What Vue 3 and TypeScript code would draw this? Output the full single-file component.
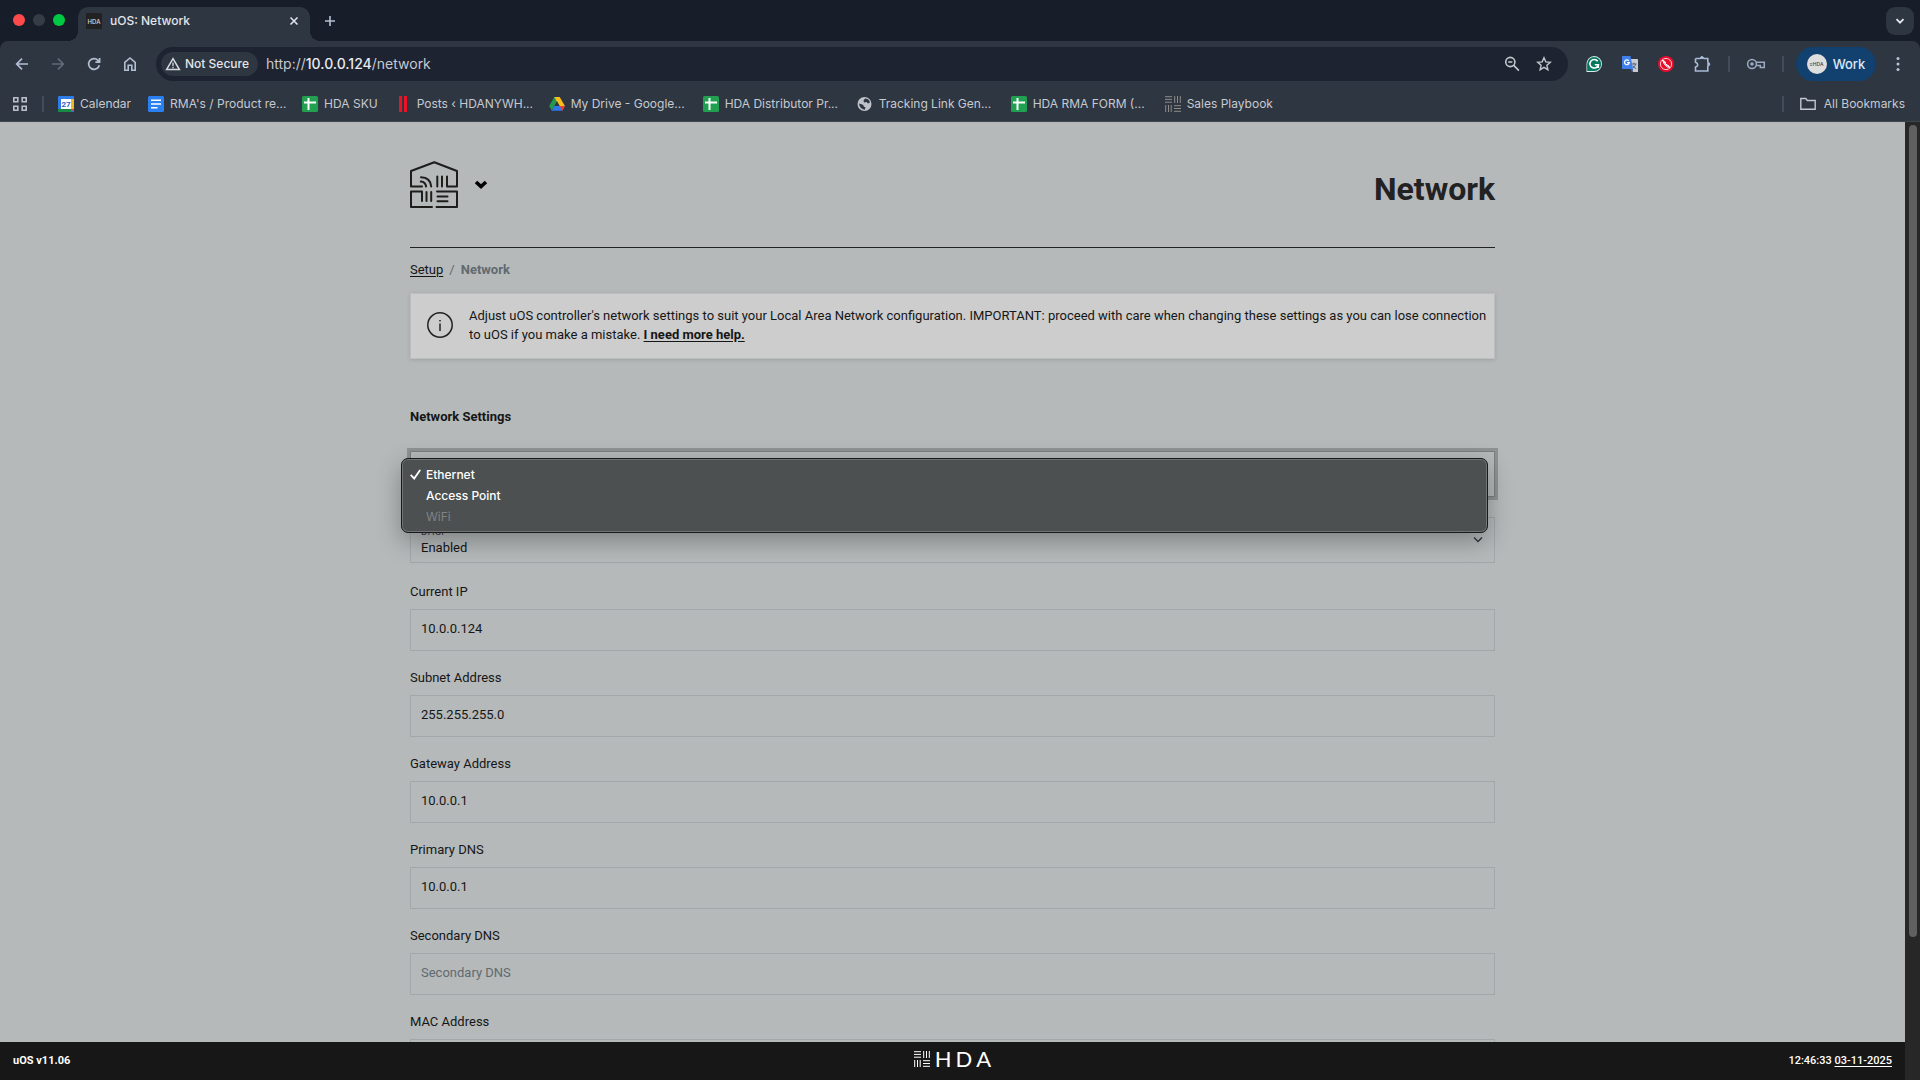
<script setup lang="ts">
import { ref } from 'vue'

type BookmarkIcon = 'calendar' | 'docs' | 'sheets' | 'bars' | 'drive' | 'globe' | 'grid'

interface Bookmark {
  label: string
  icon: BookmarkIcon
  clipped?: boolean
}

interface Field {
  id: string
  label: string
  value: string
  placeholder?: string
}

const bookmarks: Bookmark[] = [
  { label: 'Calendar', icon: 'calendar' },
  { label: "RMA's / Product re...", icon: 'docs', clipped: true },
  { label: 'HDA SKU', icon: 'sheets' },
  { label: 'Posts ‹ HDANYWH...', icon: 'bars', clipped: true },
  { label: 'My Drive - Google...', icon: 'drive', clipped: true },
  { label: 'HDA Distributor Pr...', icon: 'sheets', clipped: true },
  { label: 'Tracking Link Gen...', icon: 'globe', clipped: true },
  { label: 'HDA RMA FORM (...', icon: 'sheets', clipped: true },
  { label: 'Sales Playbook', icon: 'grid' },
]

const options = [
  { label: 'Ethernet', disabled: false },
  { label: 'Access Point', disabled: false },
  { label: 'WiFi', disabled: true },
]

const connection = ref('Ethernet')
const dhcp = ref('Enabled')

const fields = ref<Field[]>([
  { id: 'current-ip', label: 'Current IP', value: '10.0.0.124' },
  { id: 'subnet', label: 'Subnet Address', value: '255.255.255.0' },
  { id: 'gateway', label: 'Gateway Address', value: '10.0.0.1' },
  { id: 'dns-primary', label: 'Primary DNS', value: '10.0.0.1' },
  { id: 'dns-secondary', label: 'Secondary DNS', value: '', placeholder: 'Secondary DNS' },
  { id: 'mac', label: 'MAC Address', value: '' },
])
</script>

<template>
  <div class="window">
    <header class="chrome">
      <div class="tabstrip">
        <div class="lights"><i class="red"></i><i class="grey"></i><i class="green"></i></div>
        <div class="tab">
          <span class="favicon">HDA</span>
          <span class="tab-title">uOS: Network</span>
          <button class="tab-close" aria-label="Close tab">
            <svg width="10" height="10" viewBox="0 0 10 10"><path d="M1.5 1.5l7 7M8.500 1.500l-7 7" stroke="#dfe3ea" stroke-width="1.600" /></svg>
          </button>
        </div>
        <button class="new-tab" aria-label="New tab">
          <svg width="12" height="12" viewBox="0 0 12 12"><path d="M6 1v10M1 6h10" stroke="#b4c0d4" stroke-width="1.600" /></svg>
        </button>
        <button class="tab-search" aria-label="Search tabs">
          <svg width="12" height="12" viewBox="0 0 12 12" fill="none"><path d="M2.500 4.200L6 7.700l3.500-3.500" stroke="#e4e8ee" stroke-width="1.800" /></svg>
        </button>
      </div>

      <div class="toolbar">
        <button class="tool" aria-label="Back">
          <svg width="16" height="16" viewBox="0 0 16 16" fill="none" stroke="#b2bed2" stroke-width="1.700"><path d="M14 8H3M8 2.700L2.700 8 8 13.300" /></svg>
        </button>
        <button class="tool" aria-label="Forward">
          <svg width="16" height="16" viewBox="0 0 16 16" fill="none" stroke="#606a78" stroke-width="1.700"><path d="M2 8h11M8 2.700L13.300 8 8 13.300" /></svg>
        </button>
        <button class="tool" aria-label="Reload">
          <svg width="16" height="16" viewBox="0 0 16 16" fill="none" stroke="#b2bed2" stroke-width="1.700"><path d="M13.300 9.200A5.400 5.400 0 1 1 12 4.300L13.600 6M13.600 2v4.200H9.400" /></svg>
        </button>
        <button class="tool" aria-label="Home">
          <svg width="16" height="16" viewBox="0 0 16 16" fill="none" stroke="#b2bed2" stroke-width="1.600"><path d="M2.800 6.300L8 2l5.200 4.300v8H9.800V9.300H6.200v5H2.800z" /></svg>
        </button>

        <div class="omnibox">
          <button class="chip">
            <svg width="16" height="14" viewBox="0 0 16 14" fill="none" stroke="#d5d9e0" stroke-width="1.500"><path d="M8 1.700L14.400 12.500H1.600z" /><path d="M8 5.500v3.400M8 9.800v1.400" stroke-width="1.300" /></svg>
            <span>Not Secure</span>
          </button>
          <span class="url">http://<b>10.0.0.124</b>/network</span>
          <button class="inner" aria-label="Zoom">
            <svg width="16" height="16" viewBox="0 0 16 16" fill="none" stroke="#c3c7ce" stroke-width="1.600"><circle cx="6.300" cy="6" r="4.600" /><path d="M9.700 9.400l5.200 5.200M4.200 6h4.200" /></svg>
          </button>
          <button class="inner" aria-label="Bookmark this page">
            <svg width="16" height="16" viewBox="0 0 16 16" fill="none" stroke="#c3c7ce" stroke-width="1.400"><path d="M8 1.800l1.800 4.100 4.500.4-3.400 3 1 4.400L8 11.400l-3.900 2.300 1-4.400-3.400-3 4.500-.4z" /></svg>
          </button>
        </div>

        <button class="tool" aria-label="Grammarly">
          <svg width="16" height="16" viewBox="0 0 16 16"><path d="M8 0a8 8 0 1 1 0 16H.5V8A7.800 7.800 0 0 1 8 0z" fill="#d7eee9" /><circle cx="8.200" cy="8" r="7" fill="#08775f" /><path d="M1.200 8v7h7" fill="#08775f" /><path d="M11.700 5.200A4.300 4.300 0 1 0 12.400 8.800H8.800M12.300 8.500v3.400" fill="none" stroke="#fff" stroke-width="1.600" /></svg>
        </button>
        <button class="tool" aria-label="Translate">
          <svg width="16" height="16" viewBox="0 0 16 16"><path d="M6 3h9.300q.7 0 .7.700V16h-5z" fill="#c8ccd2" /><path d="M9.500 8h5M12 6.500V8M13.800 8q-.8 3-3.400 4.200M10.800 9.500q1 2.300 3.400 3.300" stroke="#57657a" fill="none" /><path d="M0 .8Q0 0 .8 0H8.500L11 13H.8Q0 13 0 12.200z" fill="#3f80ea" /><path d="M8.500 13h2.700L9.500 16z" fill="#3558b6" /><path d="M6.800 4.800A2.400 2.400 0 1 0 7.300 6.700H5" fill="none" stroke="#fff" stroke-width="1.300" /></svg>
        </button>
        <button class="tool" aria-label="Call blocker">
          <svg width="16" height="16" viewBox="0 0 16 16" fill="none"><circle cx="8" cy="8" r="8" fill="#e80d2d" /><circle cx="8" cy="8" r="5.600" stroke="#f6c6cc" /><path d="M5.500 4.400q-1 1 .8 3.600t4 3.500l1-1.200-1.600-1.200-1 .5-1.600-2.200.5-1.200z" stroke="#fff" /><path d="M4 4l8 8" stroke="#fff" /></svg>
        </button>
        <button class="tool" aria-label="Extensions">
          <svg width="18" height="18" viewBox="0 0 18 18" fill="none" stroke="#a9bbd8" stroke-width="1.600"><path d="M2.500 3.500h5M10.500 3.500h4.300v4M14.800 11v5H2.500v-4q2.200-.4 2.200-2.200T2.500 7.300V3.500" /><path d="M7.200 3.500q0-2 1.700-2t1.700 2zM14.800 7.500q2 0 2 1.700t-2 1.700z" fill="#a9bbd8" stroke-width="1" /></svg>
        </button>
        <i class="divider spaced"></i>
        <button class="tool" aria-label="Passwords">
          <svg width="20" height="14" viewBox="0 0 20 14" fill="none" stroke="#9cabc2" stroke-width="1.500"><circle cx="6" cy="7" r="4.400" /><circle cx="6" cy="7" r="1.800" fill="#9cabc2" stroke="none" /><path d="M10 5.300h8.300v5.200h-4V8.500H10" /></svg>
        </button>
        <i class="divider spaced"></i>
        <button class="profile"><span class="avatar">≡HDA</span><span>Work</span></button>
        <button class="tool more" aria-label="Menu">
          <svg width="4" height="16" viewBox="0 0 4 16" fill="#b9c4d6"><circle cx="2" cy="2.500" r="1.500" /><circle cx="2" cy="8" r="1.500" /><circle cx="2" cy="13.500" r="1.500" /></svg>
        </button>
      </div>

      <nav class="bookmarks">
        <button class="apps" aria-label="Apps">
          <svg width="14" height="14" viewBox="0 0 14 14" fill="none" stroke="#bcc0c8" stroke-width="1.600"><path d="M.8.8h4v4h-4zM9.200.8h4v4h-4zM.8 9.200h4v4h-4zM9.200 9.200h4v4h-4z" /></svg>
        </button>
        <i class="divider"></i>
        <div class="links">
          <a v-for="b in bookmarks" :key="b.label" href="#" class="bookmark">
            <svg width="16" height="16" viewBox="0 0 16 16">
              <template v-if="b.icon === 'calendar'">
                <rect width="16" height="16" rx="1" fill="#2f7de9" /><path d="M13 3h3v10h-3z" fill="#f4b529" /><path d="M0 13h13v3H1q-1 0-1-1z" fill="#188a42" /><path d="M13 13h3l-3 3z" fill="#e34133" /><path d="M3 3h10v10H3z" fill="#fff" />
                <text x="8" y="11" text-anchor="middle" font-family="Roboto, sans-serif" font-weight="700" font-size="8" fill="#2a63c4">27</text>
              </template>
              <template v-else-if="b.icon === 'docs'">
                <rect width="16" height="16" rx="1.500" fill="#2a80f0" /><path d="M3 4.200h10M3 8h10M3 11.800h6.500" stroke="#fff" stroke-width="1.600" />
              </template>
              <template v-else-if="b.icon === 'sheets'">
                <rect width="16" height="16" rx="1.500" fill="#20a050" /><path d="M2 6.500h12M6.500 2v12" stroke="#fff" stroke-width="2" />
              </template>
              <template v-else-if="b.icon === 'bars'">
                <path d="M4 0h3v16H4zM9 0h3v16H9z" fill="#ec1326" />
              </template>
              <template v-else-if="b.icon === 'drive'">
                <path d="M5.300 1h5.400L5.400 10 2.700 14.500.2 10z" fill="#27994d" /><path d="M5.300 1h5.400l5.200 9h-5.300z" fill="#fbbc1c" /><path d="M5.300 10h10.600l-2.600 4.700H2.700z" fill="#3079e8" /><path d="M10.600 10h5.300l-2.600 4.700z" fill="#e94235" /><path d="M8 5.600l2.600 4.400H5.400z" fill="#2e3642" />
              </template>
              <template v-else-if="b.icon === 'globe'">
                <circle cx="7.500" cy="8" r="7" fill="#bfc2c8" /><path d="M8 2.500q4 0 5 4L11 7.500 9.500 6 7 6.500 6.500 4.500zM2 7.500l4 1.200 1 2 1.500.5-.7 2.600Q2.500 13 2 7.500z" fill="#2e3642" />
              </template>
              <template v-else>
                <path d="M0 .7h7M0 3.400h7M0 6.200h7M9.700 0v7M12.500 0v7M15.300 0v7M.7 9v7M3.500 9v7M6.200 9v7M9 9.700h7M9 12.500h7M9 15.300h7" stroke="#8e8c88" />
              </template>
            </svg>
            <span :class="{ clipped: b.clipped }">{{ b.label }}</span>
          </a>
        </div>
        <i class="divider"></i>
        <a href="#" class="bookmark all">
          <svg width="16" height="14" viewBox="0 0 16 14" fill="none" stroke="#c3c7ce" stroke-width="1.400"><path d="M.8 12.200V1.500h5l1.500 2h7.900v8.700z" /></svg>
          <span>All Bookmarks</span>
        </a>
      </nav>
    </header>

    <div class="viewport">
      <div class="page">
        <main class="content">
          <div class="container">
            <header class="masthead">
              <button class="brand" aria-label="Menu">
                <svg width="48" height="48" viewBox="0 0 48 48" fill="none" stroke="#1d1d1b" stroke-width="2" stroke-linecap="round" stroke-linejoin="round">
                  <path d="M12 25.500H1V10L24.300 1.200 47 10v15.500H37V15.500M27.300 15.500v10M32 15.500v10" />
                  <path d="M11 16.200q9.500.3 10.200 9.300M10.800 20.500q4.700.3 5.300 5" />
                  <path d="M22 46H1V30.500h11V40M16.500 31v9M21.200 31v9" />
                  <path d="M27 30.500h20V46H26.500M27.500 35.500h10M27.500 40.200h10" />
                </svg>
                <svg width="14" height="10" viewBox="0 0 14 10" fill="none" stroke="#000" stroke-width="3.600"><path d="M2 2l5 4.600L12 2" /></svg>
              </button>
              <h1>Network</h1>
            </header>

            <nav class="crumbs"><a href="#">Setup</a><span class="slash">/</span><b>Network</b></nav>

            <section class="notice">
              <svg width="28" height="28" viewBox="0 0 28 28" fill="none" stroke="#222" stroke-width="1.500"><circle cx="14" cy="14" r="12.200" /><path d="M14 12.500v7.500M14 9v1.600" /></svg>
              <p>Adjust uOS controller's network settings to suit your Local Area Network configuration. IMPORTANT: proceed with care when changing these settings as you can lose connection to uOS if you make a mistake. <a href="#">I need more help.</a></p>
            </section>

            <h2>Network Settings</h2>

            <form class="form" @submit.prevent>
              <div class="drop focused">
                <select id="connection" v-model="connection" aria-label="Connection">
                  <option v-for="o in options" :key="o.label" :disabled="o.disabled">{{ o.label }}</option>
                </select>
                <div class="popup" role="listbox" aria-label="Connection">
                  <button
                    v-for="o in options"
                    :key="o.label"
                    type="button"
                    role="option"
                    :aria-selected="o.label === connection"
                    :disabled="o.disabled"
                    @click="connection = o.label"
                  >
                    <span class="tick">
                      <svg v-if="o.label === connection" width="11" height="11" viewBox="0 0 11 11" fill="none" stroke="#fff" stroke-width="1.800" stroke-linecap="round"><path d="M1.200 6.400l3 3.200L9.800 1.400" /></svg>
                    </span>
                    {{ o.label }}
                  </button>
                </div>
              </div>

              <div class="drop">
                <label for="dhcp">DHCP</label>
                <select id="dhcp" v-model="dhcp">
                  <option>Enabled</option>
                  <option>Disabled</option>
                </select>
                <svg class="caret" width="10" height="8" viewBox="0 0 10 8" fill="none" stroke="#343a40" stroke-width="1.500"><path d="M1 1.500l4 4 4-4" /></svg>
              </div>

              <div v-for="f in fields" :key="f.id" class="field">
                <label :for="f.id">{{ f.label }}</label>
                <input :id="f.id" v-model="f.value" type="text" :placeholder="f.placeholder" />
              </div>
            </form>
          </div>
        </main>

        <footer class="status">
          <span>uOS v11.06</span>
          <div class="wordmark">
            <svg width="16" height="16" viewBox="0 0 16 16" stroke="#fff"><path d="M0 .7h7M0 3.400h7M0 6.200h7M9.700 0v7M12.500 0v7M15.300 0v7M.7 9v7M3.500 9v7M6.200 9v7M9 9.700h7M9 12.500h7M9 15.300h7" /></svg>
            <span class="letters"><span>H</span><span>D</span><span>A</span></span>
          </div>
          <span class="clock">12:46:33 <a href="#">03-11-2025</a></span>
        </footer>
      </div>
      <div class="scrollbar"><i></i></div>
    </div>
  </div>
</template>

<style>
html,
body {
  margin: 0;
  background: #b5b9ba;
}
</style>

<style scoped>
* {
  box-sizing: border-box;
}
button {
  border: 0;
  padding: 0;
  background: none;
  color: inherit;
  font: inherit;
  display: flex;
  align-items: center;
  justify-content: center;
}
svg {
  display: block;
  flex: none;
}
.window {
  display: flex;
  flex-direction: column;
  height: 100vh;
  overflow: hidden;
}

/* browser chrome */
.chrome {
  flex: none;
  background: #171e29;
  border-bottom: 1px solid #40454c;
  font-family: Inter, "Liberation Sans", sans-serif;
  font-size: 12px;
  color: #c6c9cf;
}
.tabstrip {
  display: flex;
  align-items: center;
  height: 41px;
  padding: 0 6px 0 13px;
}
.lights {
  display: flex;
  gap: 8px;
  width: 65px;
  padding-bottom: 1px;
}
.lights i {
  width: 12px;
  height: 12px;
  border-radius: 50%;
}
.red {
  background: #ff4a4c;
}
.grey {
  background: #363c46;
}
.green {
  background: #00c944;
}
.tab {
  position: relative;
  align-self: flex-end;
  display: flex;
  align-items: center;
  gap: 8px;
  width: 232px;
  height: 34px;
  padding: 0 10px 6px 8px;
  border-radius: 10px 10px 0 0;
  background: #2e3642;
  color: #e2e5ea;
  font-weight: 500;
}
.tab::before,
.tab::after {
  content: "";
  position: absolute;
  bottom: 0;
  width: 10px;
  height: 10px;
}
.tab::before {
  right: 100%;
  background: radial-gradient(circle at 0 0, #171e29 10px, #2e3642 10px);
}
.tab::after {
  left: 100%;
  background: radial-gradient(circle at 100% 0, #171e29 10px, #2e3642 10px);
}
.favicon {
  width: 16px;
  height: 16px;
  background: #222;
  color: #ddd;
  font-size: 6px;
  line-height: 17px;
  text-align: center;
}
.tab-title {
  flex: 1;
}
.tab-title,
.bookmark span,
.chip span,
.url {
  padding-bottom: 2px;
}
.tab-close {
  width: 12px;
  height: 16px;
}
.new-tab {
  width: 28px;
  height: 28px;
  margin: 0 auto 0 6px;
}
.tab-search {
  width: 28px;
  height: 28px;
  border-radius: 9px;
  background: #2e3642;
}
.toolbar {
  display: flex;
  align-items: center;
  height: 46px;
  padding: 0 4px;
  border-radius: 8px 8px 0 0;
  background: #2e3642;
}
.tool {
  width: 36px;
  height: 34px;
}
.omnibox {
  flex: 1;
  display: flex;
  align-items: center;
  height: 34px;
  margin: 0 8px;
  padding: 0 8px 0 5px;
  border-radius: 17px;
  background: #1d2330;
}
.chip {
  height: 24px;
  gap: 4px;
  padding: 0 9px 0 4px;
  border-radius: 12px;
  background: #2e3642;
  color: #e2e5ea;
  font-weight: 500;
}
.url {
  flex: 1;
  margin-left: 8px;
  font-size: 14px;
  color: #c6c9cf;
}
.url b {
  font-weight: 500;
  color: #e8eaee;
}
.inner {
  width: 32px;
  height: 32px;
}
.divider {
  flex: none;
  width: 2px;
  height: 16px;
  background: #434c5a;
}
.spaced {
  margin: 0 8px;
}
.profile {
  gap: 6px;
  width: 80px;
  height: 34px;
  margin-left: 4px;
  border-radius: 17px;
  background: #12406f;
  color: #dbe8fb;
  font-size: 13px;
  font-weight: 500;
}
.avatar {
  width: 20px;
  height: 20px;
  border-radius: 50%;
  background: #dedede;
  color: #444;
  font-size: 5px;
  line-height: 20px;
  text-align: center;
}
.more {
  margin-left: 4px;
}
.bookmarks {
  display: flex;
  align-items: center;
  height: 34px;
  padding: 0 15px 0 13px;
  background: #2e3642;
}
.apps {
  margin-right: 15px;
}
.links {
  flex: 1;
  display: flex;
  gap: 17px;
  margin-left: 14px;
}
.bookmark {
  display: flex;
  align-items: center;
  gap: 6px;
  color: inherit;
  text-decoration: none;
  white-space: nowrap;
}
.clipped {
  width: 115px;
}
.all {
  gap: 8px;
  margin-left: 16px;
}

/* page */
.viewport {
  flex: 1;
  display: flex;
  min-height: 0;
}
.page {
  flex: 1;
  display: flex;
  flex-direction: column;
  min-width: 0;
  background: #b5b9ba;
  font-family: Roboto, "Liberation Sans", sans-serif;
  font-size: 13px;
  color: #161616;
}
.content {
  flex: 1;
  min-height: 0;
  overflow: hidden;
}
.container {
  max-width: 1085px;
  margin: 0 auto;
}
.masthead {
  display: flex;
  align-items: center;
  justify-content: space-between;
  height: 126px;
  border-bottom: 1px solid #222;
}
.brand {
  gap: 16px;
}
h1 {
  margin: 8px 0 0;
  font-size: 32px;
  line-height: 40px;
  color: #222;
}
.crumbs {
  display: flex;
  gap: 6px;
  margin-top: 12px;
  line-height: 20px;
  color: #616a70;
}
.crumbs a,
.notice a {
  color: #161616;
  text-underline-offset: 2px;
}
.notice {
  display: flex;
  align-items: center;
  gap: 15px;
  margin-top: 13px;
  padding: 12px 0 14px 15px;
  border: 1px solid #bcbebf;
  background: #cdcdcd;
  box-shadow: 0 1px 4px rgba(0, 0, 0, 0.12);
}
.notice p {
  margin: 0;
  line-height: 19px;
}
.notice a {
  font-weight: 700;
}
h2 {
  margin: 48px 0 24px;
  font-size: 13px;
  line-height: 20px;
}
.form {
  display: flex;
  flex-direction: column;
}
.drop {
  position: relative;
  margin-bottom: 2px;
}
.drop + .drop {
  margin-top: 18px;
}
.drop label {
  position: absolute;
  top: 9px;
  left: 11px;
  font-size: 10px;
  line-height: 12px;
  color: #3a3d40;
}
select,
input {
  display: block;
  width: 100%;
  border: 1px solid #a3a7a9;
  border-radius: 0;
  outline: 0;
  background: transparent;
  color: #161616;
  font: inherit;
  appearance: none;
}
select {
  height: 46px;
  padding: 14px 10px 0;
}
.focused select {
  border-color: #7c7f81;
  box-shadow: 0 0 0 3px #8f9293;
}
.caret {
  position: absolute;
  top: 19px;
  right: 12px;
}
.popup {
  position: absolute;
  z-index: 2;
  top: 7px;
  left: -9px;
  right: 7px;
  padding: 5px 8px;
  border: 1px solid #17191a;
  border-radius: 7px;
  background: #4c5051;
  box-shadow: inset 0 0 0 1px #717475, 0 8px 24px rgba(0, 0, 0, 0.3);
  font-family: Inter, "Liberation Sans", sans-serif;
  font-size: 12px;
  font-weight: 500;
  color: #fff;
}
.popup button {
  justify-content: flex-start;
  width: 100%;
  height: 21px;
}
.popup button:disabled {
  color: #808384;
  font-weight: 400;
}
.tick {
  width: 16px;
}
.field {
  display: flex;
  flex-direction: column;
  gap: 7px;
  margin-top: 17px;
}
.field label {
  line-height: 20px;
}
input {
  height: 42px;
  padding: 0 10px 3px;
}
input::placeholder {
  color: #616a70;
  opacity: 1;
}
.status {
  flex: none;
  display: grid;
  grid-template-columns: 1fr auto 1fr;
  align-items: center;
  height: 38px;
  padding: 0 13px 2px;
  background: #171717;
  color: #fff;
  font-size: 11px;
  font-weight: 700;
}
.clock {
  justify-self: end;
  font-weight: 500;
}
.clock a {
  color: inherit;
  text-underline-offset: 2px;
}
.wordmark {
  display: flex;
  align-items: center;
  gap: 5px;
  padding-bottom: 2px;
}
.letters {
  display: flex;
  gap: 4px;
  font-family: Lato, sans-serif;
  font-size: 22px;
  font-weight: 400;
  line-height: 20px;
}
.scrollbar {
  flex: none;
  width: 15px;
  padding: 3px 3px 0 4px;
  background: #272727;
}
.scrollbar i {
  display: block;
  height: 85%;
  border-radius: 4px;
  background: #606060;
}
</style>
